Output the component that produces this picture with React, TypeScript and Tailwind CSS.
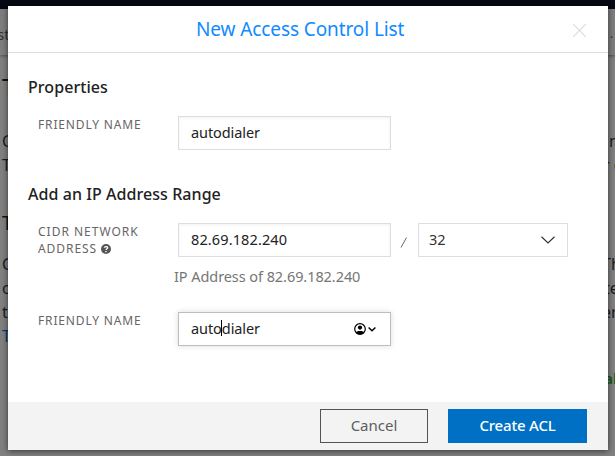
import type { ReactNode } from "react";

const pageRows = [
  { left: "T", right: "", leftClass: "text-[26px] text-[#111]", rightClass: "", top: "h-[60px] pt-[6px]" },
  { left: "C", right: "n", leftClass: "text-[16px]", rightClass: "pl-[1px]", top: "h-[24px]" },
  { left: "T", right: "r o", leftClass: "text-[16px]", rightClass: "-ml-[5px]", top: "h-[48px]" },
  { left: "T", right: "", leftClass: "text-[19px] text-[#111]", rightClass: "", top: "h-[51px] pt-[10px]" },
  { left: "C", right: "Th", leftClass: "text-[16px]", rightClass: "-ml-[6px]", top: "h-[24px]" },
  { left: "o", right: "te", leftClass: "text-[16px]", rightClass: "-ml-[4px]", top: "h-[24px]" },
  { left: "t", right: "er", leftClass: "text-[16px]", rightClass: "-ml-[6px]", top: "h-[24px]" },
  { left: "T", right: "", leftClass: "text-[16px] text-[#003b6e]", rightClass: "", top: "h-[42px]" },
  { left: "", right: "al", leftClass: "", rightClass: "-ml-[4px] text-[15px] font-bold text-[#1c5a22]", top: "h-[24px]" },
];

function Page() {
  return (
    <div className="flex h-full flex-col overflow-hidden bg-[#808080] text-[16px] leading-[24px] text-[#1c1c1c]">
      <div className="h-[9px] shrink-0 bg-[#060913]" />
      <div className="flex h-[46px] shrink-0 items-center justify-between bg-[#7e7e7e] pt-[4px] text-[#333] shadow-[0_1px_3px_rgba(0,0,0,0.4)]">
        <span className="w-[8px] whitespace-nowrap -indent-[3px] text-[15px]">st</span>
        <span className="w-[5px] whitespace-nowrap text-[12px]">.</span>
      </div>
      <div className="h-[14px] shrink-0" />
      {pageRows.map((row, i) => (
        <div key={i} className={`flex shrink-0 justify-between ${row.top}`}>
          <span className={`ml-[2px] w-[8px] whitespace-nowrap ${row.leftClass}`}>{row.left}</span>
          <span className="w-[7px] whitespace-nowrap">
            <span className={`inline-block ${row.rightClass}`}>{row.right}</span>
          </span>
        </div>
      ))}
    </div>
  );
}

function Label({ children }: { children: ReactNode }) {
  return <div className="w-[140px] shrink-0 text-[12px] leading-[18px] text-[#666]">{children}</div>;
}

const fieldClass = "flex h-[34px] w-[213px] items-center border bg-white pl-[12px] text-[14.5px] text-[#222]";

export default function App() {
  return (
    <div className="relative h-[456px] w-[615px] overflow-hidden font-['Noto_Sans',sans-serif]">
      <Page />
      <div
        role="dialog"
        className="absolute top-[6px] left-[8px] flex h-[444px] w-[600px] flex-col bg-white shadow-[0_1px_6px_rgba(0,0,0,0.6)]"
      >
        <header className="flex h-[47px] shrink-0 items-center border-b border-[#dedede] pr-[22px] pl-[188px]">
          <h1 className="text-[19px] whitespace-nowrap text-[#0f8aff]">
            <span className="tracking-[-0.1px]">New Access Control List</span>
          </h1>
          <svg className="mt-[2px] ml-auto" width="13" height="13" viewBox="0 0 13 13" stroke="#dcdcdc" strokeWidth="1.1">
            <path d="M0 0L13 13M13 0L0 13" />
          </svg>
        </header>

        <main className="flex grow flex-col pl-[20px]">
          <h2 className="mt-[22px] text-[16px] leading-[24px] font-medium text-[#222]">
            <span className="tracking-[0.06px]">Properties</span>
          </h2>
          <div className="mt-[17px] flex pl-[10px]">
            <Label>
              <span className="tracking-[0.85px]">FRIENDLY NAME</span>
            </Label>
            <div className={`${fieldClass} border-[#dedede] shadow-[inset_0_1px_3px_rgba(0,0,0,0.06)]`}>
              <span className="tracking-[-0.08px]">autodialer</span>
            </div>
          </div>

          <h2 className="mt-[32px] text-[16px] leading-[24px] font-medium text-[#222]">
            <span className="tracking-[0.06px]">Add an IP Address Range</span>
          </h2>
          <div className="mt-[17px] flex pl-[10px]">
            <Label>
              <div>
                <span className="tracking-[1px]">CIDR NETWORK</span>
              </div>
              <div className="-mt-[1px] flex items-center leading-[18px]">
                <span className="tracking-[0.95px]">ADDRESS</span>
                <svg className="ml-[4px]" width="10" height="10" viewBox="0 0 10 10" fill="none">
                  <circle cx="5" cy="5" r="5" fill="#555" />
                  <path d="M3.3 3.8C3.4 2.2 6.7 2.1 6.7 3.8C6.7 4.8 5 4.8 5 6.1" stroke="#fff" strokeWidth="1.3" />
                  <path d="M5 7V8.3" stroke="#fff" strokeWidth="1.4" />
                </svg>
              </div>
            </Label>
            <div className={`${fieldClass} border-[#dedede] shadow-[inset_0_1px_3px_rgba(0,0,0,0.06)]`}>
              <span className="tracking-[0.12px]">82.69.182.240</span>
            </div>
            <svg className="mt-[13px] ml-[9px]" width="8" height="13" viewBox="0 0 8 13" stroke="#666" strokeWidth="1">
              <path d="M1 11.5L6.5 1.5" />
            </svg>
            <div className="ml-[10px] flex h-[34px] w-[150px] items-center justify-between border border-[#dedede] bg-white pr-[12px] pl-[10px] text-[14.5px] text-[#333]">
              <span>32</span>
              <svg width="14" height="8" viewBox="0 0 14 8" fill="none" stroke="#333" strokeWidth="1.2">
                <path d="M0.5 0.7L7 7L13.5 0.7" />
              </svg>
            </div>
          </div>
          <div className="mt-[7px] pl-[146px] text-[14.5px] leading-[22px] text-[#767676]">
            <span className="tracking-[-0.07px]">IP Address of 82.69.182.240</span>
          </div>

          <div className="mt-[25px] flex pl-[10px]">
            <Label>
              <span className="tracking-[0.85px]">FRIENDLY NAME</span>
            </Label>
            <div className={`${fieldClass} border-[#bdbdbd] pr-[14px] shadow-[0_0_6px_rgba(0,0,0,0.14)]`}>
              <span className="flex tracking-[-0.08px]">
                <span>auto</span>
                <span className="-mx-[0.5px] mt-[2px] h-[16px] w-[1px] bg-black" />
                <span>dialer</span>
              </span>
              <svg className="ml-auto" width="22" height="12" viewBox="0 0 22 12" fill="none" stroke="#000">
                <circle cx="6" cy="6" r="5.3" strokeWidth="1.2" />
                <circle cx="6" cy="4.6" r="2.1" fill="#000" stroke="none" />
                <path d="M1.8 9.2C3.4 7.5 8.6 7.5 10.2 9.2C8.8 12 3.2 12 1.8 9.2Z" fill="#000" stroke="none" />
                <path d="M14.6 4.4L18 7.8L21.4 4.4" strokeWidth="1.4" />
              </svg>
            </div>
          </div>
        </main>

        <footer className="flex h-[48px] shrink-0 items-center justify-end gap-[20px] bg-[#f3f3f3] pr-[21px]">
          <button className="flex h-[34px] w-[108px] items-center justify-center border border-[#555] pb-[1px] text-[15px] text-[#5e5e5e]">
            <span>Cancel</span>
          </button>
          <button className="flex h-[34px] w-[139px] items-center justify-center bg-[#0070c4] pb-[1px] text-[15px] font-medium text-white">
            <span className="tracking-[-0.2px]">Create ACL</span>
          </button>
        </footer>
      </div>
    </div>
  );
}
